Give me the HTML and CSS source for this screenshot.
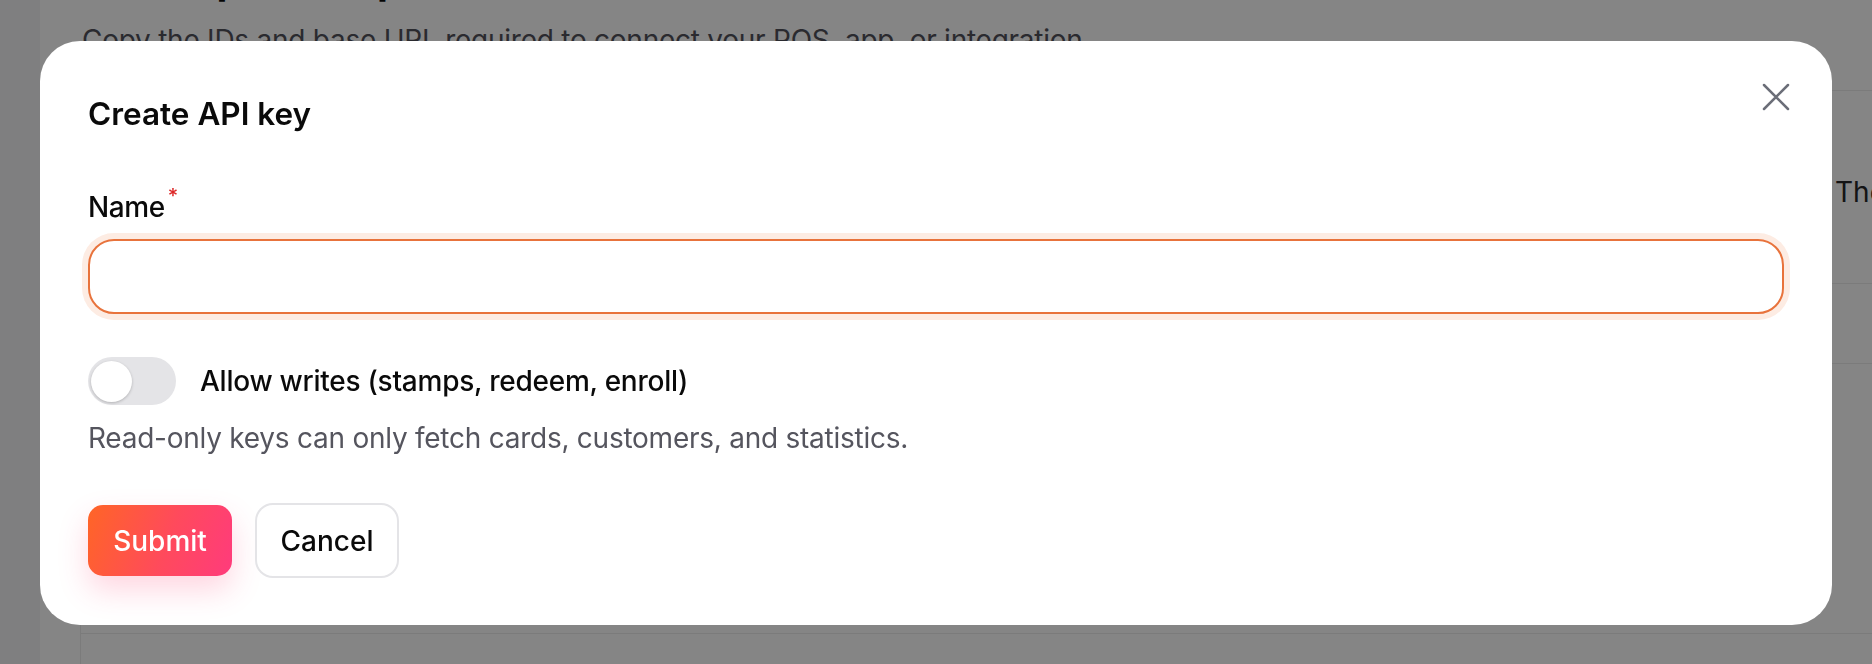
FILE: index.html
```html
<!DOCTYPE html>
<html lang="en">
<head>
<meta charset="utf-8">
<title>Create API key</title>
<link rel="stylesheet" href="styles.css">
</head>
<body>
<div class="page">
  <aside class="sidebar"></aside>
  <main class="main">
    <h1 class="page-title">Developer setup</h1>
    <p class="page-sub">Copy the IDs and base URL required to connect your POS, app, or integration.</p>
    <section class="card">
      <div class="card-row row-tall"><span></span><span class="cell-text">The</span></div>
      <div class="card-row row-mid"></div>
      <div class="card-row row-big"></div>
      <div class="card-row row-end"></div>
    </section>
  </main>
</div>

<div class="overlay">
  <div class="modal" role="dialog" aria-labelledby="dlg-title">
    <button class="close" aria-label="Close">
      <svg viewBox="0 0 28 28" width="28" height="28" fill="none" stroke="currentColor" stroke-width="2.5" stroke-linecap="round"><path d="M2 2 26 26M26 2 2 26"/></svg>
    </button>
    <h2 class="modal-title" id="dlg-title">Create API key</h2>
    <label class="field-label" for="name">Name<span class="req">*</span></label>
    <input class="text-input" id="name" type="text">
    <div class="switch-row">
      <span class="switch"><span class="knob"></span></span>
      <span class="switch-label">Allow writes (stamps, redeem, enroll)</span>
    </div>
    <p class="help">Read-only keys can only fetch cards, customers, and statistics.</p>
    <div class="actions">
      <button class="btn btn-primary">Submit</button>
      <button class="btn btn-secondary">Cancel</button>
    </div>
  </div>
</div>
</body>
</html>
```

FILE: styles.css
```css
* { box-sizing: border-box; }

html, body {
  margin: 0;
  padding: 0;
}

body {
  font-family: Inter, "Noto Sans", "Liberation Sans", sans-serif;
  color: #0a0a0a;
  background: #ffffff;
  overflow: hidden;
}

.page {
  display: flex;
  height: 664px;
  overflow: hidden;
}

.sidebar {
  width: 40px;
  flex: none;
  background: #f4f4f5;
}

.main {
  flex: 1;
  padding-left: 42px;
  background: #ffffff;
  min-width: 0;
}

.page-title {
  margin: -44px 0 0;
  font-size: 40px;
  line-height: 48px;
  font-weight: 700;
}

.page-sub {
  margin: 16px 0 0;
  font-size: 28px;
  line-height: 40px;
  letter-spacing: -0.25px;
  color: #52525b;
  white-space: nowrap;
}

.card {
  margin: 30px 0 0 -2px;
  width: 1900px;
  border-left: 1px solid #ececec;
  border-top: 1px solid #ececec;
}

.card-row {
  display: grid;
  grid-template-columns: 1754px 1fr;
  align-items: center;
  border-bottom: 1px solid #ececec;
}

.row-tall { height: 193px; }
.row-mid { height: 80px; }
.row-big { height: 270px; }
.row-end { height: 60px; }

.cell-text {
  font-size: 28px;
  color: #27272a;
  padding-top: 9px;
}

/* overlay + dialog */
.overlay {
  position: fixed;
  inset: 0;
  background: rgba(0, 0, 0, 0.48);
  padding: 41px 40px 0;
}

.modal {
  position: relative;
  width: 1792px;
  height: 584px;
  background: #ffffff;
  border-radius: 40px;
  padding: 49px 48px 47px;
}

.close {
  position: absolute;
  top: 42px;
  right: 42px;
  width: 28px;
  height: 28px;
  padding: 0;
  border: 0;
  background: none;
  color: #6b6e78;
  display: block;
}

.close svg { display: block; }

.modal-title {
  margin: 0;
  font-size: 31.5px;
  line-height: 47px;
  font-weight: 600;
  color: #0a0a0a;
}

.field-label {
  display: block;
  margin-top: 49px;
  font-size: 28px;
  line-height: 42px;
  font-weight: 500;
  letter-spacing: -0.4px;
}

.req {
  display: inline-block;
  vertical-align: top;
  margin-left: 3px;
  font-size: 20px;
  line-height: 20px;
  color: #dc2626;
}

.text-input {
  display: block;
  width: 100%;
  height: 75px;
  margin-top: 11px;
  border: 2px solid #e8733c;
  border-radius: 26px;
  box-shadow: 0 0 0 6px #fdece3;
  outline: none;
  font: inherit;
  font-size: 28px;
  padding: 0 24px;
  background: #fff;
}

.switch-row {
  display: flex;
  align-items: center;
  gap: 24px;
  margin-top: 43px;
}

.switch {
  position: relative;
  width: 88px;
  height: 48px;
  border-radius: 24px;
  background: #e4e4e7;
  flex: none;
}

.knob {
  position: absolute;
  left: 3px;
  top: 4px;
  width: 41px;
  height: 41px;
  border-radius: 50%;
  background: #ffffff;
  box-shadow: 0 1px 3px rgba(0, 0, 0, 0.22);
}

.switch-label {
  font-size: 28px;
  line-height: 42px;
  font-weight: 500;
  letter-spacing: -0.25px;
}

.help {
  margin: 12px 0 0;
  font-size: 28px;
  line-height: 42px;
  letter-spacing: -0.25px;
  color: #55555e;
}

.actions {
  display: flex;
  align-items: center;
  gap: 23px;
  margin-top: 44px;
}

.btn {
  font: inherit;
  font-size: 28px;
  font-weight: 500;
  width: 144px;
  cursor: pointer;
  display: flex;
  align-items: center;
  justify-content: center;
}

.btn-primary {
  height: 71px;
  border: 0;
  border-radius: 15px;
  color: #ffffff;
  background: linear-gradient(110deg, #ff6526 0%, #ff4a5c 55%, #ff3b7c 100%);
  box-shadow: 0 14px 30px rgba(255, 70, 120, 0.22);
}

.btn-secondary {
  height: 75px;
  border: 2px solid #e4e4e7;
  border-radius: 18px;
  background: #ffffff;
  color: #0a0a0a;
}
```
